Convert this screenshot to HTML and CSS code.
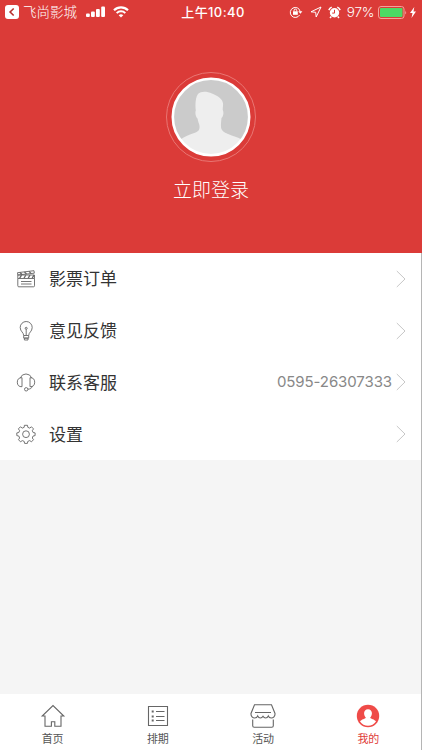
FILE: index.html
```html
<!DOCTYPE html>
<html lang="zh-CN">
<head>
  <meta charset="UTF-8" />
  <meta name="viewport" content="width=device-width, initial-scale=1.0"/>
  <title>我的</title>
  <link rel="stylesheet" href="styles.css">
</head>
<body>
  <div class="app">

    <!-- Header -->
    <header class="header">
      <div class="status-bar">
        <div class="status-left">
          <svg class="back-app" width="14" height="14" viewBox="0 0 14 14"><rect width="14" height="14" rx="3" fill="#fff"/><path d="M8.7 3.5 5.1 7l3.6 3.5" fill="none" stroke="#b92f2c" stroke-width="1.6"/></svg>
          <span class="app-name">飞尚影城</span>
          <svg class="signal" width="20" height="12" viewBox="0 0 20 12" fill="#fff"><rect x="0" y="7.500" width="3.800" height="3.600" rx="1"/><rect x="5" y="5.500" width="3.800" height="5.600" rx="1"/><rect x="10" y="3" width="3.800" height="8.100" rx="1"/><rect x="15.200" y=".4" width="3.800" height="10.700" rx="1"/></svg>
          <svg class="wifi" width="16" height="12" viewBox="0 0 16 12" fill="none" stroke="#fff"><path d="M1 4.200a10 10 0 0 1 14 0" stroke-width="2.200"/><path d="M3.700 7.100a6.100 6.100 0 0 1 8.600 0" stroke-width="2"/><path d="M8 11.600 5.700 9.300a3.300 3.300 0 0 1 4.600 0z" fill="#fff" stroke="none"/></svg>
        </div>
        <div class="time">上午10:40</div>
        <div class="status-right">
          <svg class="rotation" width="14" height="12" viewBox="0 0 14 12" fill="none" stroke="#fff"><path d="M10.600 9A5 5 0 1 1 11.200 5.500"/><path d="m9.200 5.200 2.200 2.500 2-2.500z" fill="#fff" stroke="none"/><rect x="4" y="5.300" width="4.800" height="3.500" fill="#fff" stroke="none"/><path d="M5.100 5.500V4.400a1.300 1.300 0 0 1 2.600 0v1.100"/></svg>
          <svg class="location" width="12" height="12" viewBox="0 0 12 12"><path d="M11 1 1 5.800l4.700.5L6.200 11z" fill="none" stroke="#fff" stroke-linejoin="round"/></svg>
          <svg class="alarm" width="13" height="13" viewBox="0 0 13 13"><circle cx="6.500" cy="6.800" r="4.700" fill="#fff"/><path d="M.8 4.100A7 7 0 0 1 3.700 1.200M9.300 1.200a7 7 0 0 1 2.900 2.900M3.300 10.600 2 12M9.700 10.600 11 12" stroke="#fff" stroke-width="1.500" fill="none"/><path d="M6.500 3.800v3.300H4.200" fill="none" stroke="#db3b38"/></svg>
          <span class="percent">97%</span>
          <svg class="battery" width="29" height="13" viewBox="0 0 29 13"><rect x=".5" y=".5" width="25.500" height="12" rx="2.500" fill="none" stroke="#f3a29b"/><rect x="2" y="2" width="22.500" height="9" rx="1" fill="#4cd964"/><path d="M27.200 4.500q1.800 2 0 4z" fill="#f3a29b"/></svg>
          <svg class="bolt" width="6" height="11" viewBox="0 0 6 11"><path d="M4.300 0 0 6h2.500l-1 5L6 4.600H3.500z" fill="#fff"/></svg>
        </div>
      </div>
      <div class="avatar-ring">
        <svg class="avatar" width="80" height="80" viewBox="0 0 80 80">
          <circle cx="40" cy="40" r="38" fill="#cbcbcb"/>
          <path d="M9 63C13 59.500 18 58 22.500 56.200C27 54.500 28.800 53.500 28.500 49C28.300 46.500 27 45 26.500 41.500C24.800 40 23.800 36 24.800 33.500C24 28 24.500 20 27 17C30 13.800 36 14.200 41 16.500C47 19.300 51.500 21.500 52 26.500C52.300 29 51.500 31 51.800 33C53.200 36 52 39.500 50.500 41C50.300 44 49.800 46 50 50C50.200 53.500 53 55.200 57 57C62 59.200 67 60 71 63A38 38 0 0 1 9 63z" fill="#eee"/>
          <circle cx="40" cy="40" r="38.200" fill="none" stroke="#fff" stroke-width="2.600"/>
        </svg>
      </div>
      <div class="login">立即登录</div>
    </header>

    <!-- Menu -->
    <main class="menu">
      <div class="menu-item">
        <svg class="menu-icon" viewBox="0 0 20 20"><path d="M1.800 9.500h16.700v7.300a1 1 0 0 1-1 1H2.800a1 1 0 0 1-1-1zM1.800 9.500V6h16.700v3.500M1.500 3.700l16.500-2 .3 2.500L1.800 6zM5 12.500h10.500M5 15h10.500"/><path d="m4 3.500 2 2M8.500 3l2 2M13 2.400l2 2M5.500 6.200 3.700 9.200M9.700 6.200 8 9.200M14 6.200l-1.800 3M18 6.200l-1.800 3" stroke-width="1.300"/></svg>
        <span class="menu-label">影票订单</span>
        <svg class="arrow" viewBox="0 0 10 18"><path d="m.8 1 8.200 8-8.200 8"/></svg>
      </div>
      <div class="menu-item">
        <svg class="menu-icon" viewBox="0 0 20 20"><path d="M7.700 14.500c0-3.200-3.500-3.900-3.500-8a6 6 0 0 1 12 0c0 4.100-3.500 4.800-3.500 8zM7.700 14.500v2.600h5v-2.600M8.400 19h3.600v-1.900H8.400zM10.200 14.300V8.200"/><circle cx="10.200" cy="7.300" r="1"/></svg>
        <span class="menu-label">意见反馈</span>
        <svg class="arrow" viewBox="0 0 10 18"><path d="m.8 1 8.200 8-8.200 8"/></svg>
      </div>
      <div class="menu-item">
        <svg class="menu-icon" viewBox="0 0 20 20"><path d="M4.300 5.900a6.100 6.100 0 0 1 11.400 0M6 5.700v9C3 15 1.300 13.200 1.300 10.200S3 5.500 6 5.700zM14 5.700v9c3 .3 4.700-1.500 4.700-4.500S17 5.500 14 5.700zM16.300 14.300c-.5 1.900-2 2.800-4.500 2.900"/><circle cx="10.200" cy="17.300" r="1.700"/></svg>
        <span class="menu-label">联系客服</span>
        <span class="phone">0595-26307333</span>
        <svg class="arrow" viewBox="0 0 10 18"><path d="m.8 1 8.200 8-8.200 8"/></svg>
      </div>
      <div class="menu-item">
        <svg class="menu-icon" viewBox="0 0 20 20"><path d="m8.400 1.300-.2 2-1.900.8-1.900-1.300-2 2.100 1.200 1.800-.8 1.800-2 .4v2.700l2 .4.8 2-1.100 1.700 2 2.100 1.800-1.200 1.900.8.400 2h2.800l.4-2 1.900-.8 1.800 1.200 2-2.100-1.200-1.700.8-2 2-.4V8.900l-2-.4-.8-1.800 1.200-1.800-2-2.100-1.800 1.300-1.900-.8-.3-2z"/><circle cx="10" cy="10.200" r="3.400"/></svg>
        <span class="menu-label">设置</span>
        <svg class="arrow" viewBox="0 0 10 18"><path d="m.8 1 8.200 8-8.200 8"/></svg>
      </div>
    </main>

    <!-- Tab bar -->
    <nav class="tab-bar">
      <div class="tab">
        <svg class="tab-icon" viewBox="0 0 26 24"><path d="M5 12H2.200L13 1.500 23.800 12H21v10.200h-6.200v-4.500h-3.400v4.500H5z"/></svg>
        <span>首页</span>
      </div>
      <div class="tab">
        <svg class="tab-icon" viewBox="0 0 26 24"><path d="M3.500 2.500h19v19h-19zM11 7.500h8.500M11 12.500h8.500M11 16.500h8.500"/><path d="M6.700 7.500h2M6.700 12.500h2M6.700 16.500h2" stroke-width="2"/></svg>
        <span>排期</span>
      </div>
      <div class="tab">
        <svg class="tab-icon" viewBox="0 0 26 24"><path d="M4.500 .7h17l3.500 8.800c.3 3-1.800 4.500-3.700 4.500-1.800 0-2.600-1-3-2-.6 1.300-1.600 2-2.700 2-1.200 0-2-.7-2.600-1.700-.6 1-1.400 1.700-2.600 1.700-1.100 0-2.100-.7-2.700-2-.4 1-1.200 2-3 2C2.800 14 .7 12.500 1 9.500zM5 8.500h16M2.700 15.500v6.300c0 .9.6 1.500 1.500 1.500h17.600c.9 0 1.500-.6 1.500-1.500v-6.300"/></svg>
        <span>活动</span>
      </div>
      <div class="tab active">
        <svg class="tab-icon" viewBox="0 0 26 24"><circle class="user-bg" cx="13" cy="12" r="11.200"/><path class="user" d="M13 5.200c2.600 0 4.100 2 3.900 4.300-.1 1.700-.7 3-1.700 3.900.2 1.500 4.500 1.600 5.800 4.200a9.800 9.800 0 0 1-16 0c1.300-2.600 5.600-2.700 5.800-4.200-1-.9-1.600-2.200-1.700-3.900C8.900 7.200 10.400 5.200 13 5.200z"/></svg>
        <span>我的</span>
      </div>
    </nav>

  </div>
</body>
</html>
```
FILE: styles.css
```css
body {
  margin: 0;
  font-family: "Liberation Sans", "Noto Sans CJK SC", sans-serif;
  background: #f5f5f5;
}

.app {
  display: flex;
  flex-direction: column;
  height: 100vh;
  box-sizing: border-box;
  border-right: 1px solid #b5b5b5;
}

.header {
  display: flex;
  flex-direction: column;
  align-items: center;
  height: 253px;
  margin-right: -1px;
  background: #db3b38;
  color: #fff;
}

.status-bar {
  display: grid;
  grid-template-columns: 1fr auto 1fr;
  align-items: center;
  width: 100%;
  height: 24px;
  box-sizing: border-box;
  padding: 0 6px 0 5px;
  font-family: Inter, "Noto Sans CJK SC", sans-serif;
  font-size: 13.5px;
  line-height: 24px;
}

.status-left,
.status-right {
  display: flex;
  align-items: center;
}

.status-right {
  justify-content: flex-end;
}

.app-name {
  margin: 0 9px 0 4px;
  font-weight: 300;
}

.signal {
  margin-right: 7px;
}

.time {
  padding-left: 5px;
  font-size: 13px;
  font-weight: 500;
  letter-spacing: 0.4px;
}

.location {
  margin: 0 6px 0 7px;
}

.percent {
  margin: 0 4px 0 6px;
  font-size: 13.5px;
  font-weight: 300;
  letter-spacing: -0.3px;
}

.bolt {
  margin-left: 3px;
}

.avatar-ring {
  display: flex;
  align-items: center;
  justify-content: center;
  width: 88px;
  height: 88px;
  margin-top: 48px;
  border: 1px solid #e97673;
  border-radius: 50%;
}

.login {
  margin-top: 12px;
  font-family: "Noto Sans CJK SC", sans-serif;
  font-size: 19px;
  font-weight: 300;
  line-height: 30px;
}

.menu {
  height: 207px;
  display: flex;
  flex-direction: column;
  background: #fff;
}

.menu-item {
  flex: 1;
  display: flex;
  align-items: center;
  padding: 0 15px 0 16px;
}

.menu-icon {
  width: 20px;
  height: 20px;
  fill: none;
  stroke: #666;
  stroke-width: 0.9;
}

.menu-label {
  flex: 1;
  margin-left: 13px;
  padding-bottom: 2px;
  color: #333;
  font-size: 17px;
}

.phone {
  margin-right: 4px;
  padding-bottom: 1px;
  color: #888;
  font-family: Inter, sans-serif;
  font-size: 15px;
  letter-spacing: -0.1px;
}

.arrow {
  width: 10px;
  height: 18px;
  fill: none;
  stroke: #c7c7c7;
}

.tab-bar {
  display: flex;
  height: 56px;
  margin-top: auto;
  background: #fff;
}

.tab {
  flex: 1;
  display: flex;
  flex-direction: column;
  align-items: center;
  padding-top: 10px;
  color: #555;
  font-size: 11px;
  line-height: 16px;
}

.tab span {
  margin-top: 3px;
}

.tab-icon {
  width: 26px;
  height: 24px;
  fill: none;
  stroke: #666;
  stroke-width: 1.1;
}

.tab.active {
  color: #e03c38;
}

.user-bg {
  fill: #ef4b48;
  stroke: none;
}

.user {
  fill: #fff;
  stroke: none;
}
```
